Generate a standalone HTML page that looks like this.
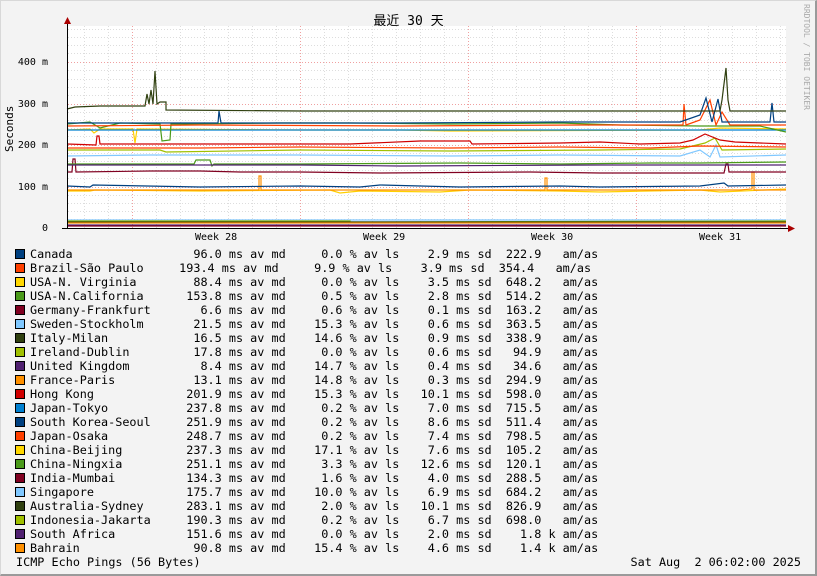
<!DOCTYPE html>
<html><head><meta charset="utf-8"><style>
body{margin:0;}
#w{position:relative;width:817px;height:576px;background:#f3f3f3;overflow:hidden;font-family:"DejaVu Sans Mono","Liberation Mono",monospace;color:#000;}
#b{position:absolute;left:0;top:0;border-top:1px solid #d8d8d8;border-left:1px solid #d8d8d8;border-right:2px solid #9a9a9a;border-bottom:2px solid #9a9a9a;box-sizing:border-box;width:817px;height:576px;}
.t{position:absolute;white-space:pre;font-size:10px;line-height:12px;}
.lg{position:absolute;left:30px;white-space:pre;font-size:11.8px;line-height:14px;height:14px;}
</style></head><body><div id="w"><div id="b"></div>
<div class="t" style="left:0;width:817px;top:14px;text-align:center;font-size:13px;line-height:15px;font-family:'DejaVu Sans Mono','Noto Sans CJK SC',monospace;">最近 30 天</div>
<div class="t" style="left:801px;top:4px;font-size:8px;color:#aaa;transform-origin:0 0;transform:translate(11px,0) rotate(90deg);">RRDTOOL / TOBI OETIKER</div>
<div class="t" style="left:4px;top:152px;font-size:11px;transform-origin:0 0;transform:rotate(-90deg);">Seconds</div>
<div class="t" style="left:0;width:48px;text-align:right;top:57px;">400 m</div>
<div class="t" style="left:0;width:48px;text-align:right;top:99px;">300 m</div>
<div class="t" style="left:0;width:48px;text-align:right;top:140px;">200 m</div>
<div class="t" style="left:0;width:48px;text-align:right;top:182px;">100 m</div>
<div class="t" style="left:0;width:48px;text-align:right;top:223px;">0</div>
<div class="t" style="left:195px;top:232px;">Week 28</div>
<div class="t" style="left:363px;top:232px;">Week 29</div>
<div class="t" style="left:531px;top:232px;">Week 30</div>
<div class="t" style="left:699px;top:232px;">Week 31</div>
<svg style="position:absolute;left:0;top:0" width="817" height="576">
<rect x="67" y="26" width="719" height="202" fill="#fff"/>
<g stroke="#ddd" stroke-width="1" stroke-dasharray="1,2">
<path d="M68,219.5H786M68,211.5H786M68,203.5H786M68,195.5H786M68,178.5H786M68,170.5H786M68,161.5H786M68,153.5H786M68,136.5H786M68,128.5H786M68,120.5H786M68,112.5H786M68,95.5H786M68,87.5H786M68,79.5H786M68,70.5H786M68,53.5H786M68,45.5H786M68,37.5H786M68,29.5H786"/>
<path d="M84.5,26V228M108.5,26V228M156.5,26V228M180.5,26V228M204.5,26V228M228.5,26V228M252.5,26V228M276.5,26V228M324.5,26V228M348.5,26V228M372.5,26V228M396.5,26V228M420.5,26V228M444.5,26V228M492.5,26V228M516.5,26V228M540.5,26V228M564.5,26V228M588.5,26V228M612.5,26V228M660.5,26V228M684.5,26V228M708.5,26V228M732.5,26V228M756.5,26V228M780.5,26V228"/>
</g>
<g stroke="#f0a0a0" stroke-width="1" stroke-dasharray="1,2">
<path d="M68,62.5H786M68,104.5H786M68,145.5H786M68,187.5H786"/>
<path d="M132.5,26V228M300.5,26V228M468.5,26V228M636.5,26V228"/>
</g>
<g fill="none" stroke-width="1.2">
<polyline stroke="#80c8ff" points="67,220 786,220"/>
<polyline stroke="#a0c000" points="67,221 350,221 350,222 786,221"/>
<polyline stroke="#304010" points="67,222 786,222"/>
<polyline stroke="#ff9000" points="67,223 786,223"/>
<polyline stroke="#502070" points="67,225 786,225"/>
<polyline stroke="#800020" points="67,226 786,226"/>
<polyline stroke="#ffd000" points="67,191 90,191 95,190 200,191 330,190 340,193 360,191 440,192 470,190 560,191 600,192 700,190 720,192 786,189"/>
<polyline stroke="#ff9000" points="67,190 259,190 259,176 261,176 261,190 545,190 545,178 547,178 547,190 740,190 752,189 752,172 754,172 754,190 786,190"/>
<polyline stroke="#004080" points="67,186 90,187 93,185 200,187 300,186 360,187 380,185 460,187 560,186 600,187 700,186 724,183 728,186 786,185"/>
<polyline stroke="#800020" points="67,172 72,172 73,159 75,159 76,172 150,171 200,171 240,172 300,172 380,173 530,172 600,173 724,173 726,164 728,164 729,172 786,172"/>
<polyline stroke="#4a9a1a" points="67,164 194,164 196,160 210,160 212,166 214,164 300,164 460,163 560,164 650,163 700,163 786,162"/>
<polyline stroke="#502070" points="67,165 300,165 400,166 600,165 786,165"/>
<polyline stroke="#80c8ff" points="67,156 150,155 300,155 450,156 560,155 680,156 700,150 710,157 716,145 720,157 786,155"/>
<polyline stroke="#a0c000" points="67,150 160,150 166,152 300,150 450,151 600,150 680,149 705,143 715,138 722,150 786,149"/>
<polyline stroke="#ff4000" points="67,148 200,148 300,147 450,148 560,147 650,148 700,146 786,147"/>
<polyline stroke="#d00000" points="67,144 96,145 97,136 99,136 100,144 200,144 320,144 350,144 420,141 470,141 472,144 560,143 600,142 640,144 680,143 693,140 705,134 720,140 735,142 786,144"/>
<polyline stroke="#ffd000" points="67,130 90,129 94,133 100,129 133,129 135,143 137,129 300,130 400,130 450,131 700,130 720,128 786,129"/>
<polyline stroke="#0080d0" points="67,130 300,130 470,130 560,130 786,130"/>
<polyline stroke="#4a9a1a" points="67,124 90,122 100,128 120,123 160,124 162,141 170,140 171,124 280,123 350,123 450,124 560,123 620,125 700,126 720,126 760,126 786,132"/>
<polyline stroke="#ff4000" points="67,126 200,125 400,126 580,125 683,125 684,104 686,125 700,120 710,100 716,125 722,112 730,125 786,125"/>
<polyline stroke="#004080" points="67,123 218,123 219,111 221,123 400,123 560,122 680,122 700,115 706,98 712,122 718,99 722,122 770,122 772,103 774,122 786,122"/>
<polyline stroke="#304010" points="67,109 75,107 100,106 145,106 147,94 149,104 151,90 153,104 155,71 157,104 160,102 166,102 166,110 300,111 400,111 500,111 720,111 722,100 726,68 728,100 730,111 786,111"/>
</g>
<path d="M67.5,22V229M62,228.5H790" stroke="#000" stroke-width="1"/>
<path d="M64,24L67.5,17L71,24Z" fill="#a00"/>
<path d="M788,225L795,228.5L788,232Z" fill="#a00"/>
<g stroke="#000" stroke-width="1">
<rect x="15.5" y="249.5" width="9" height="9" fill="#004080"/>
<rect x="15.5" y="263.5" width="9" height="9" fill="#ff4000"/>
<rect x="15.5" y="277.5" width="9" height="9" fill="#ffd700"/>
<rect x="15.5" y="291.5" width="9" height="9" fill="#4a9a1a"/>
<rect x="15.5" y="305.5" width="9" height="9" fill="#800020"/>
<rect x="15.5" y="319.5" width="9" height="9" fill="#80c8ff"/>
<rect x="15.5" y="333.5" width="9" height="9" fill="#304010"/>
<rect x="15.5" y="347.5" width="9" height="9" fill="#a0c000"/>
<rect x="15.5" y="361.5" width="9" height="9" fill="#502070"/>
<rect x="15.5" y="375.5" width="9" height="9" fill="#ff9000"/>
<rect x="15.5" y="389.5" width="9" height="9" fill="#d00000"/>
<rect x="15.5" y="403.5" width="9" height="9" fill="#0080d0"/>
<rect x="15.5" y="417.5" width="9" height="9" fill="#004080"/>
<rect x="15.5" y="431.5" width="9" height="9" fill="#ff4000"/>
<rect x="15.5" y="445.5" width="9" height="9" fill="#ffd700"/>
<rect x="15.5" y="459.5" width="9" height="9" fill="#4a9a1a"/>
<rect x="15.5" y="473.5" width="9" height="9" fill="#800020"/>
<rect x="15.5" y="487.5" width="9" height="9" fill="#80c8ff"/>
<rect x="15.5" y="501.5" width="9" height="9" fill="#304010"/>
<rect x="15.5" y="515.5" width="9" height="9" fill="#a0c000"/>
<rect x="15.5" y="529.5" width="9" height="9" fill="#502070"/>
<rect x="15.5" y="543.5" width="9" height="9" fill="#ff9000"/>
</g>
</svg>
<div class="lg" style="top:247px">Canada                 96.0 ms av md     0.0 % av ls    2.9 ms sd  222.9   am/as</div>
<div class="lg" style="top:261px">Brazil-São Paulo     193.4 ms av md     9.9 % av ls    3.9 ms sd  354.4   am/as</div>
<div class="lg" style="top:275px">USA-N. Virginia        88.4 ms av md     0.0 % av ls    3.5 ms sd  648.2   am/as</div>
<div class="lg" style="top:289px">USA-N.California      153.8 ms av md     0.5 % av ls    2.8 ms sd  514.2   am/as</div>
<div class="lg" style="top:303px">Germany-Frankfurt       6.6 ms av md     0.6 % av ls    0.1 ms sd  163.2   am/as</div>
<div class="lg" style="top:317px">Sweden-Stockholm       21.5 ms av md    15.3 % av ls    0.6 ms sd  363.5   am/as</div>
<div class="lg" style="top:331px">Italy-Milan            16.5 ms av md    14.6 % av ls    0.9 ms sd  338.9   am/as</div>
<div class="lg" style="top:345px">Ireland-Dublin         17.8 ms av md     0.0 % av ls    0.6 ms sd   94.9   am/as</div>
<div class="lg" style="top:359px">United Kingdom          8.4 ms av md    14.7 % av ls    0.4 ms sd   34.6   am/as</div>
<div class="lg" style="top:373px">France-Paris           13.1 ms av md    14.8 % av ls    0.3 ms sd  294.9   am/as</div>
<div class="lg" style="top:387px">Hong Kong             201.9 ms av md    15.3 % av ls   10.1 ms sd  598.0   am/as</div>
<div class="lg" style="top:401px">Japan-Tokyo           237.8 ms av md     0.2 % av ls    7.0 ms sd  715.5   am/as</div>
<div class="lg" style="top:415px">South Korea-Seoul     251.9 ms av md     0.2 % av ls    8.6 ms sd  511.4   am/as</div>
<div class="lg" style="top:429px">Japan-Osaka           248.7 ms av md     0.2 % av ls    7.4 ms sd  798.5   am/as</div>
<div class="lg" style="top:443px">China-Beijing         237.3 ms av md    17.1 % av ls    7.6 ms sd  105.2   am/as</div>
<div class="lg" style="top:457px">China-Ningxia         251.1 ms av md     3.3 % av ls   12.6 ms sd  120.1   am/as</div>
<div class="lg" style="top:471px">India-Mumbai          134.3 ms av md     1.6 % av ls    4.0 ms sd  288.5   am/as</div>
<div class="lg" style="top:485px">Singapore             175.7 ms av md    10.0 % av ls    6.9 ms sd  684.2   am/as</div>
<div class="lg" style="top:499px">Australia-Sydney      283.1 ms av md     2.0 % av ls   10.1 ms sd  826.9   am/as</div>
<div class="lg" style="top:513px">Indonesia-Jakarta     190.3 ms av md     0.2 % av ls    6.7 ms sd  698.0   am/as</div>
<div class="lg" style="top:527px">South Africa          151.6 ms av md     0.0 % av ls    2.0 ms sd    1.8 k am/as</div>
<div class="lg" style="top:541px">Bahrain                90.8 ms av md    15.4 % av ls    4.6 ms sd    1.4 k am/as</div>
<div class="lg" style="top:555px;left:16px">ICMP Echo Pings (56 Bytes)</div>
<div class="lg" style="top:555px;left:auto;right:16px">Sat Aug  2 06:02:00 2025</div>
</div></body></html>
